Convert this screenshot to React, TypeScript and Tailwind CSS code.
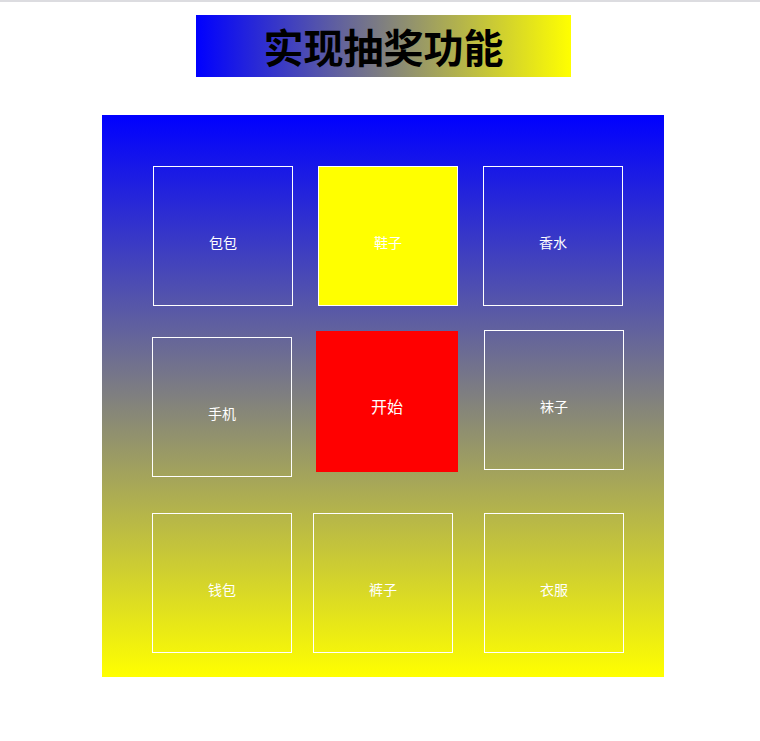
const cjk = { fontFamily: '"Noto Sans CJK SC", "Noto Sans", sans-serif' };

type Cell = {
  label: string;
  box: string;
};

const Prize = ({ label, box }: Cell) => (
  <div
    className={`flex shrink-0 items-center justify-center pt-[13px] text-[14px] text-white ${box}`}
  >
    {label}
  </div>
);

export default function App() {
  return (
    <div className="min-h-[741px] w-[760px] bg-white" style={cjk}>
      {/* top rule */}
      <div className="h-[2px] w-full bg-[#dcdce0]" />

      {/* title */}
      <div className="ml-[196px] mt-[13px] flex h-[62px] w-[375px] items-center justify-center bg-[linear-gradient(to_right,#0000ff,#ffff00)]">
        <h1 className="text-[40px] font-bold leading-none text-black">实现抽奖功能</h1>
      </div>

      {/* board */}
      <div className="ml-[102px] mt-[38px] flex h-[562px] w-[562px] flex-col bg-[linear-gradient(to_bottom,#0000ff,#ffff00)]">
        <div className="mt-[51px] flex items-start">
          <Prize label="包包" box="ml-[51px] h-[140px] w-[140px] border border-white" />
          <Prize label="鞋子" box="ml-[25px] h-[140px] w-[140px] border border-white bg-[#ffff00]" />
          <Prize label="香水" box="ml-[25px] h-[140px] w-[140px] border border-white" />
        </div>

        <div className="mt-[24px] flex items-start">
          <Prize label="手机" box="ml-[50px] mt-[7px] h-[140px] w-[140px] border border-white" />
          <button className="ml-[24px] mt-[1px] flex h-[141px] w-[142px] shrink-0 items-center justify-center bg-[#ff0000] pt-[8px] text-[16px] text-white">
            开始
          </button>
          <Prize label="袜子" box="ml-[26px] h-[140px] w-[140px] border border-white" />
        </div>

        <div className="mt-[36px] flex items-start">
          <Prize label="钱包" box="ml-[50px] h-[140px] w-[140px] border border-white" />
          <Prize label="裤子" box="ml-[21px] h-[140px] w-[140px] border border-white" />
          <Prize label="衣服" box="ml-[31px] h-[140px] w-[140px] border border-white" />
        </div>
      </div>
    </div>
  );
}
